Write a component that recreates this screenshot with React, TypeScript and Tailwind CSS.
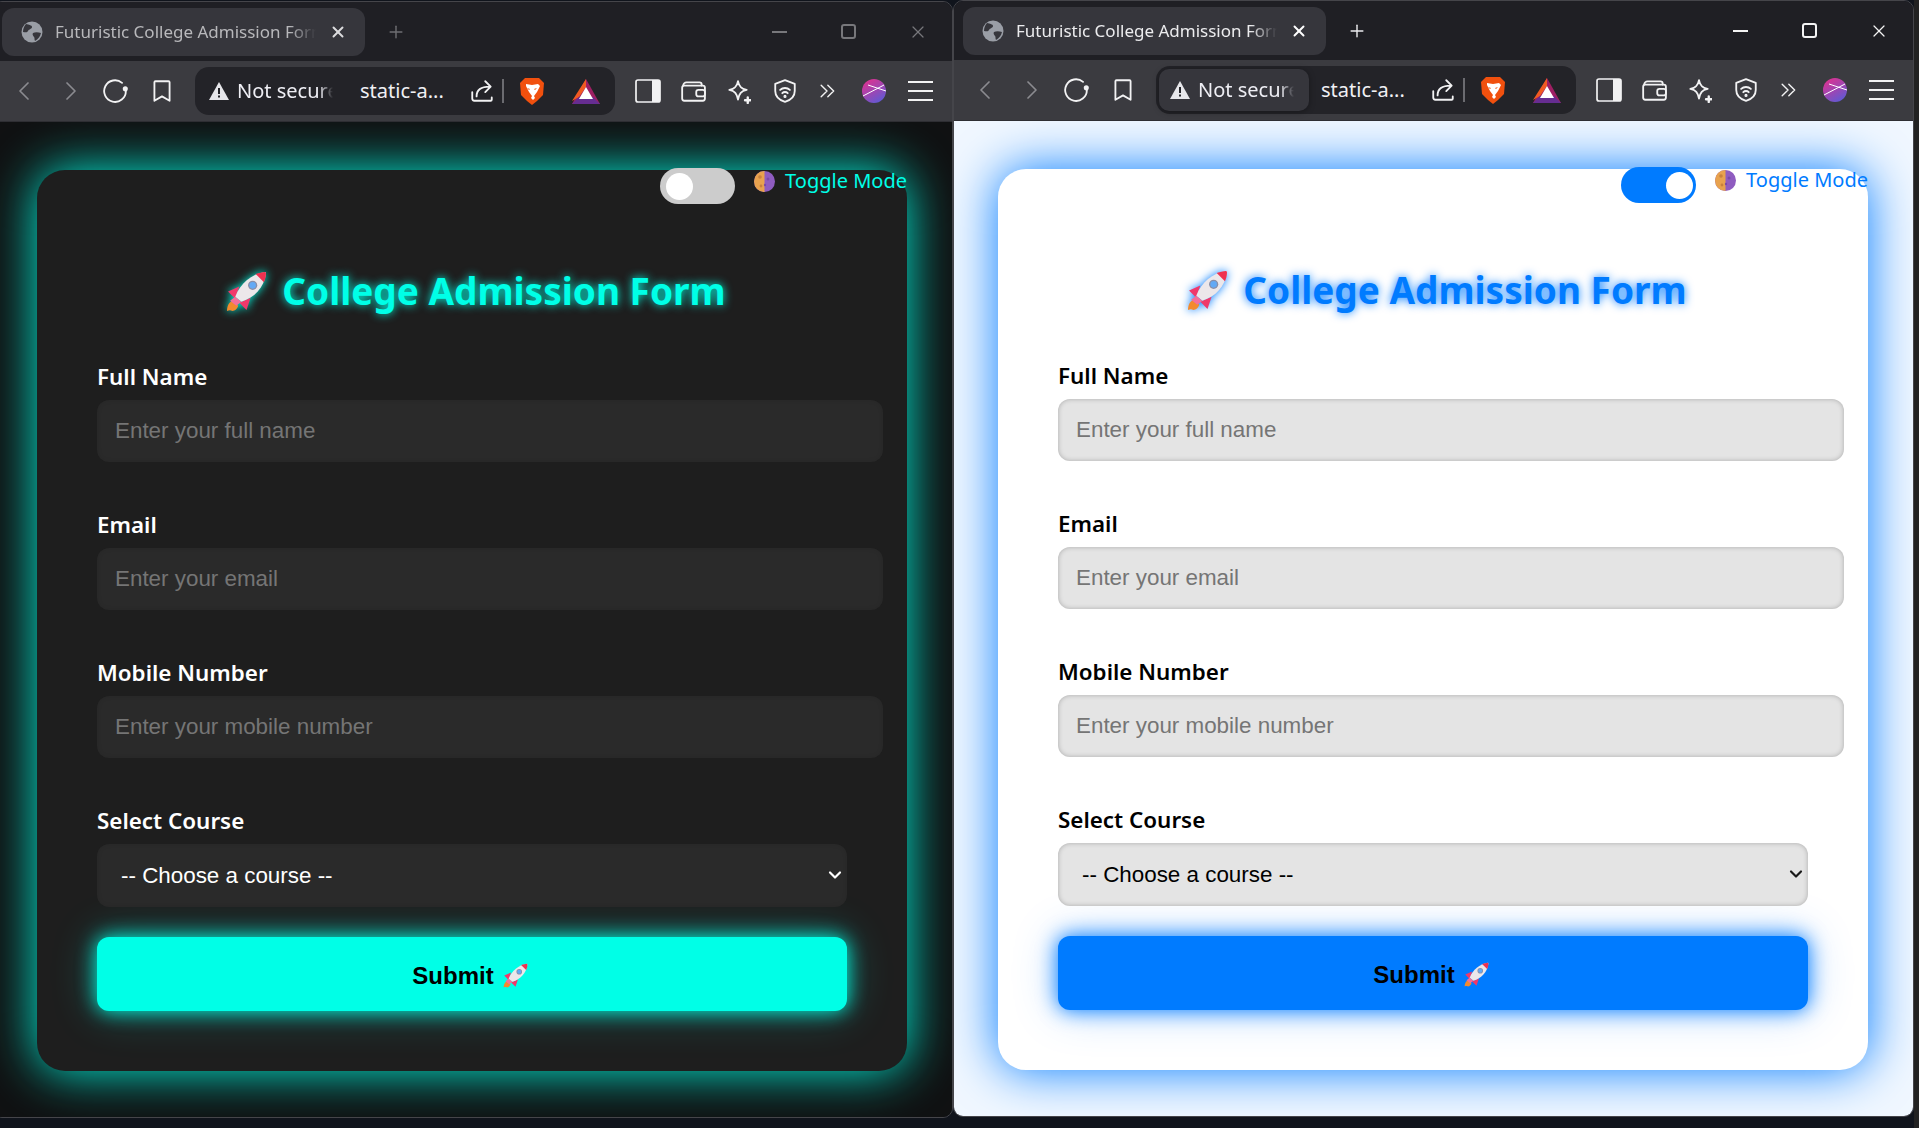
import { ChevronDown, Plus, X } from "lucide-react";

const uiFont = "font-['Noto_Sans',sans-serif]";
const formFont = "font-['Liberation_Sans',Arial,sans-serif]";

function Rocket({ className }: { className: string }) {
  return (
    <svg viewBox="0 0 40 40" className={className}>
      <path d="M1 39c0-5 2-9 6-10l5 5c-1 3-3 5-6 5-1-1-3-1-5 0z" fill="#f28a2e" />
      <path d="M2 20l11-5-4 12z" fill="#f0386b" />
      <path d="M20 38l4-12-11 5z" fill="#f0386b" />
      <path d="M9 25C14 12 25 3 38 1c1 0 1 1 1 2-2 13-11 23-24 27z" fill="#ece7ea" />
      <path d="M9 25l6 5-5 4-6-5z" fill="#f4709a" />
      <path d="M29 3c3-1 6-2 9-2 1 0 1 1 1 2 0 3-1 6-2 8z" fill="#ef3150" />
      <circle cx="26" cy="14" r="4.500" fill="#8a8fa8" />
      <circle cx="26" cy="14" r="3.200" fill="#63a9f5" />
    </svg>
  );
}

function Moon() {
  return (
    <svg viewBox="0 0 21 21" className="h-[21px] w-[21px] shrink-0">
      <circle cx="10.5" cy="10.5" r="10.5" fill="#8f5cc0" />
      <path d="M10.5 0a10.5 10.5 0 0 0 0 21z" fill="#e8a24e" />
      <circle cx="6" cy="6" r="1.8" fill="#c9813c" />
      <circle cx="7" cy="15" r="1.4" fill="#c9813c" />
      <circle cx="14" cy="8" r="1.5" fill="#7a49a8" />
      <circle cx="11" cy="14" r="1.2" fill="#7a49a8" />
    </svg>
  );
}

function Globe() {
  return (
    <svg viewBox="0 0 22 22" className="h-[22px] w-[22px] shrink-0">
      <circle cx="11" cy="11" r="10.5" fill="#9a9ea6" />
      <path d="M5 3c3 1 6 1 6 3s-3 2-4 4-3 1-5 1c0-3 1-6 3-8zM12 12c2-1 5-1 8 0-1 4-3 6-6 8-1-2 0-3-1-4s-2-3-1-4z" fill="#36363c" />
    </svg>
  );
}

function IconStroke({ size = 24, children }: { size?: number; children: React.ReactNode }) {
  return (
    <svg width={size} height={size} viewBox="0 0 24 24" fill="none" stroke="currentColor" strokeWidth="1.7" strokeLinecap="round" strokeLinejoin="round" className="shrink-0">
      {children}
    </svg>
  );
}

function Toolbar({ active }: { active: boolean }) {
  return (
    <div className="flex h-[61px] shrink-0 items-center border-b border-[#2e2e33] bg-[#3b3b40] text-[#f2f2f3]">
      <div className="ml-[20px] flex w-[182px] items-center">
        <span className="w-[45px] text-[#8b8b90]">
          <IconStroke><path d="M15 4l-8 8 8 8" /></IconStroke>
        </span>
        <span className="w-[44px] text-[#8b8b90]">
          <IconStroke><path d="M9 4l8 8-8 8" /></IconStroke>
        </span>
        <span className="w-[47px]">
          <IconStroke size={26}>
            <path d="M18.500 4.500A10 10 0 1 0 22 12" />
            <circle cx="21.500" cy="10" r="1.500" fill="currentColor" />
          </IconStroke>
        </span>
        <IconStroke size={26}><path d="M6 3h12a1 1 0 0 1 1 1v17l-7-4-7 4V4a1 1 0 0 1 1-1z" /></IconStroke>
      </div>
      <div className="flex h-[48px] w-[420px] items-center rounded-[14px] bg-[#232328]">
        <div className={`flex h-[42px] w-[150px] items-center rounded-[10px] ${active ? "ml-[3px] bg-[#36363c] pl-[11px] shadow-[0_1px_6px_rgba(0,0,0,0.35)]" : "pl-[14px]"}`}>
          <svg viewBox="0 0 20 18" className="h-[18px] w-[20px] shrink-0">
            <path d="M10 0l10 18H0z" fill="#e6e6ea" />
            <rect x="9" y="6" width="2" height="6" fill="#232328" />
            <rect x="9" y="13.5" width="2" height="2" fill="#232328" />
          </svg>
          <span className={`${uiFont} ml-[8px] w-[96px] overflow-hidden whitespace-nowrap text-[20px] leading-none text-[#eeeef4] [mask-image:linear-gradient(to_right,black_85%,transparent)]`}>
            Not secure
          </span>
        </div>
        <span className={`${uiFont} w-[103px] whitespace-nowrap text-[20px] leading-none text-[#f0f0f4] ${active ? "ml-[12px]" : "ml-[15px]"}`}>
          static-a...
        </span>
        <span className="ml-[6px] w-[33px]">
          <IconStroke size={26}>
            <path d="M3 13v6a2 2 0 0 0 2 2h15a1 1 0 0 0 1-1v-2" />
            <path d="M7 17c0-6 4-9 12-9M15 3l5 5-5 5" />
          </IconStroke>
        </span>
        <span className="h-[24px] w-[2px] bg-[#6b6b70]" />
        <svg viewBox="0 0 24 28" className="ml-[16px] h-[28px] w-[24px] shrink-0">
          <path d="M5 1h14l3 3 2 2-1 12-6 6-5 4-5-4-6-6L0 6l2-2z" fill="#f1500e" />
          <path d="M6 7l6 1 6-1 2 2-3 6-3 4 1 2-2 2-2-2 1-2-3-4-3-6z" fill="#fff" />
          <path d="M7 11l3 1-1 1zM17 11l-3 1 1 1z" fill="#f1500e" />
        </svg>
        <svg viewBox="0 0 28 25" className="ml-[28px] h-[25px] w-[28px] shrink-0">
          <path d="M14 0L28 25H0z" fill="#9e1f63" />
          <path d="M14 0L0 22l7-4 7-10z" fill="#f15a22" />
          <path d="M0 25l7-7h14l7 7z" fill="#662d91" />
          <path d="M14 8l7 12H7z" fill="#fff" />
        </svg>
      </div>
      <div className="ml-[20px] flex items-center">
        <svg viewBox="0 0 26 24" className="h-[24px] w-[26px] shrink-0">
          <rect x="1" y="1" width="24" height="22" rx="2" fill="none" stroke="currentColor" strokeWidth="1.7" />
          <path d="M17 1h6a2 2 0 0 1 2 2v18a2 2 0 0 1-2 2h-6z" fill="currentColor" />
        </svg>
        <span className="ml-[19px]">
          <IconStroke size={26}>
            <path d="M3 7a3 3 0 0 1 3-3h12a2 2 0 0 1 2 2v1" />
            <rect x="2" y="7" width="21" height="14" rx="2" />
            <rect x="15" y="11" width="8" height="6" rx="2" />
          </IconStroke>
        </span>
        <span className="ml-[19px]">
          <IconStroke size={26}>
            <path d="M12 3c1 5 3 7 8 8-5 1-7 3-8 9-1-6-3-8-8-9 5-1 7-3 8-8z" />
            <path d="M21 18v5M18.5 20.5h5" strokeWidth="2.2" />
          </IconStroke>
        </span>
        <span className="ml-[21px]">
          <IconStroke size={26}>
            <path d="M12 2l9 3.5V12c0 5-4 8.500-9 10-5-1.500-9-5-9-10V5.500z" />
            <path d="M7.500 11a6.500 6.500 0 0 1 9 0M9.500 14a3.500 3.500 0 0 1 5 0" />
            <circle cx="12" cy="17" r="0.6" fill="currentColor" />
          </IconStroke>
        </span>
        <span className="ml-[19px]">
          <IconStroke size={20}>
            <path d="M5 5l7 7-7 7M13 5l7 7-7 7" />
          </IconStroke>
        </span>
        <svg viewBox="0 0 24 24" className="ml-[25px] h-[24px] w-[24px] shrink-0">
          <defs>
            <linearGradient id={active ? "avatarA" : "avatarB"} x1="0.2" y1="0" x2="0.8" y2="1">
              <stop offset="0" stopColor="#e0318f" />
              <stop offset="1" stopColor="#5b5bd6" />
            </linearGradient>
          </defs>
          <circle cx="12" cy="12" r="12" fill={`url(#${active ? "avatarA" : "avatarB"})`} />
          <path d="M1 17L22 6M6 6l18 6" stroke="#fff" strokeWidth="1" fill="none" />
        </svg>
        <svg viewBox="0 0 25 20" className="ml-[22px] h-[20px] w-[25px] shrink-0">
          <path d="M0 1h25M0 10h25M0 19h25" stroke="currentColor" strokeWidth="1.8" />
        </svg>
      </div>
    </div>
  );
}

function TitleBar({ active }: { active: boolean }) {
  const ctl = active ? "text-[#f4f4f4]" : "text-[#77777b]";
  return (
    <div className="flex h-[59px] shrink-0 items-center bg-[#1f1f24] pl-[9px]">
      <div className="flex h-[48px] w-[363px] items-center rounded-[12px] bg-[#36363c] pl-[19px]">
        <Globe />
        <span className={`${uiFont} ml-[12px] w-[261px] overflow-hidden whitespace-nowrap text-[17px] ${active ? "text-[#ececee]" : "text-[#b8b8bb]"} [mask-image:linear-gradient(to_right,black_90%,transparent)]`}>
          Futuristic College Admission Form
        </span>
        <span className={`ml-[13px] ${active ? "text-white" : "text-[#dcdcde]"}`}>
          <X size={18} strokeWidth={2.6} />
        </span>
      </div>
      <span className={`ml-[21px] ${active ? "text-[#ececee]" : "text-[#6e6e72]"}`}>
        <Plus size={20} strokeWidth={1.7} />
      </span>
      <div className={`ml-auto mr-[24px] flex items-center ${ctl}`}>
        <span className="h-[2px] w-[15px] bg-current" />
        <span className="ml-[54px] h-[15px] w-[15px] rounded-[3px] border-2 border-current" />
        <span className="ml-[52px]"><X size={20} strokeWidth={1.5} /></span>
      </div>
    </div>
  );
}

function Field({ label, placeholder, dark }: { label: string; placeholder: string; dark: boolean }) {
  return (
    <div className="mb-[48px]">
      <label className={`${uiFont} mb-[8px] block h-[30px] text-[22.400px] font-semibold leading-[30px] ${dark ? "text-white" : "text-black"}`}>
        {label}
      </label>
      <input
        placeholder={placeholder}
        className={`${formFont} block h-[62px] w-[786px] rounded-[12px] px-[18px] text-[22.400px] outline-none placeholder:text-[#757575] ${
          dark ? "bg-[#2a2a2a] text-white shadow-[inset_0_0_5px_rgba(0,0,0,0.1)]" : "bg-[#e4e4e4] text-black shadow-[inset_0_0_5px_rgba(0,0,0,0.25)]"
        }`}
      />
    </div>
  );
}

function Browser({ dark, active, className }: { dark: boolean; active: boolean; className: string }) {
  const accent = dark ? "text-[#00ffe7]" : "text-[#007bff]";
  return (
    <div className={`flex h-[1117px] w-[961px] shrink-0 flex-col overflow-hidden rounded-[10px] border border-[#45454a] ${className}`}>
      <TitleBar active={active} />
      <Toolbar active={active} />
      <div className={`flex-1 overflow-hidden pl-[44px] pt-[48px] ${dark ? "bg-[#101112]" : "bg-[#f0f7ff]"}`}>
        <div className={`flow-root h-[901px] w-[870px] rounded-[28px] ${dark ? "bg-[#1e1e1e] shadow-[0_0_50px_rgba(0,255,231,0.95)]" : "bg-white shadow-[0_0_50px_#007bff]"}`}>
          <div className="-mt-[2px] flex h-[36px] justify-end">
            <div className={`flex h-[36px] w-[75px] items-center rounded-full ${dark ? "justify-start bg-[#cccccc] pl-[6px]" : "justify-end bg-[#007bff] pr-[3px]"}`}>
              <span className="h-[27px] w-[27px] rounded-full bg-white" />
            </div>
            <div className="ml-[19px] flex h-[26px] items-center">
              <Moon />
            </div>
            <span className={`${uiFont} ml-[10px] text-[20px] leading-[26px] ${accent}`}>Toggle Mode</span>
          </div>
          <h1 className={`${uiFont} mb-[32px] mt-[47px] flex h-[80px] items-center justify-center pl-[8px] text-[37px] font-bold ${accent} ${dark ? "[text-shadow:0_0_10px_#00ffe7]" : "[text-shadow:0_0_10px_#007bff]"}`}>
            <Rocket className={`mr-[15px] h-[41px] w-[41px] ${dark ? "drop-shadow-[0_0_5px_#00ffe7]" : "drop-shadow-[0_0_5px_#007bff]"}`} />
            College Admission Form
          </h1>
          <div className="-mt-px pl-[60px]">
            <Field label="Full Name" placeholder="Enter your full name" dark={dark} />
            <Field label="Email" placeholder="Enter your email" dark={dark} />
            <Field label="Mobile Number" placeholder="Enter your mobile number" dark={dark} />
            <label className={`${uiFont} mb-[8px] block h-[30px] text-[22.400px] font-semibold leading-[30px] ${dark ? "text-white" : "text-black"}`}>
              Select Course
            </label>
            <div className="relative w-[750px]">
              <select
                className={`${formFont} block h-[63px] w-full appearance-none rounded-[12px] px-[24px] text-[22.400px] outline-none ${
                  dark ? "bg-[#2a2a2a] text-white shadow-[inset_0_0_5px_rgba(0,0,0,0.1)]" : "bg-[#e4e4e4] text-black shadow-[inset_0_0_5px_rgba(0,0,0,0.25)]"
                }`}
              >
                <option>-- Choose a course --</option>
              </select>
              <ChevronDown
                size={20}
                strokeWidth={2.6}
                className={`pointer-events-none absolute right-[2px] top-[21px] ${dark ? "text-white" : "text-[#1a1a1a]"}`}
              />
            </div>
            <button
              className={`${formFont} mt-[30px] flex h-[74px] w-[750px] items-center justify-center rounded-[12px] pr-[4px] pt-[3px] text-[24px] font-bold text-black ${
                dark ? "bg-[#00ffe7] shadow-[0_0_20px_#00ffe7,0_0_45px_rgba(0,255,231,0.3)]" : "bg-[#007bff] shadow-[0_0_20px_#007bff,0_0_45px_rgba(0,123,255,0.3)]"
              }`}
            >
              Submit
              <Rocket className="ml-[9px] h-[25px] w-[25px]" />
            </button>
          </div>
        </div>
      </div>
    </div>
  );
}

export default function App() {
  return (
    <div className="flex h-[1128px] w-[1919px] overflow-hidden bg-[#10141c]">
      <Browser dark active={false} className="-ml-[8px] mt-px" />
      <Browser dark={false} active className="" />
      <div className="h-full flex-1 bg-[#222222]" />
    </div>
  );
}
